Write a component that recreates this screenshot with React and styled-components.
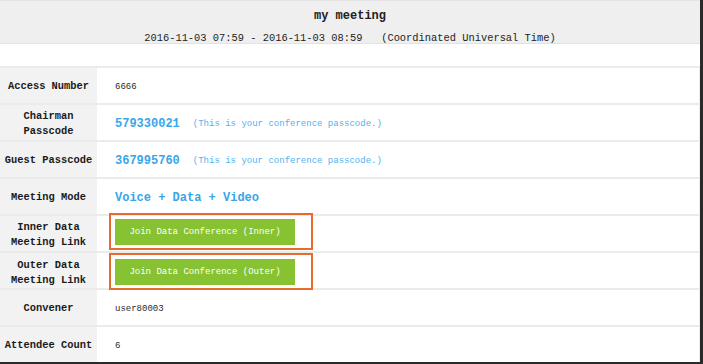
import React from "react";
import styled, { createGlobalStyle } from "styled-components";

const GlobalStyle = createGlobalStyle`
  html, body { margin: 0; padding: 0; background: #ffffff; }
  body { font-family: "Liberation Mono", "DejaVu Sans Mono", monospace; }
`;

const rows = [
  { label: ["Access Number"], kind: "plain", value: "6666" },
  { label: ["Chairman", "Passcode"], kind: "code", value: "579330021" },
  { label: ["Guest Passcode"], kind: "code", value: "367995760" },
  { label: ["Meeting Mode"], kind: "mode", value: "Voice + Data + Video" },
  { label: ["Inner Data", "Meeting Link"], kind: "link", value: "Join Data Conference (Inner)", shift: -5 },
  { label: ["Outer Data", "Meeting Link"], kind: "link", value: "Join Data Conference (Outer)", shift: -2 },
  { label: ["Convener"], kind: "plain", value: "user80003" },
  { label: ["Attendee Count"], kind: "plain", value: "6" },
];

export default function App() {
  return (
    <Page>
      <GlobalStyle />
      <Header>
        <Title>my meeting</Title>
        <TimeLine>2016-11-03 07:59 - 2016-11-03 08:59&nbsp;&nbsp;&nbsp;(Coordinated Universal Time)</TimeLine>
      </Header>
      <Gap />
      <Table>
        {rows.map((r) => (
          <Row key={r.label.join(" ")}>
            <Label>
              {r.label.map((l) => (
                <span key={l}>{l}</span>
              ))}
            </Label>
            <Cell>
              {r.kind === "plain" && <Plain>{r.value}</Plain>}
              {r.kind === "code" && (
                <>
                  <Code>{r.value}</Code>
                  <Note>(This is your conference passcode.)</Note>
                </>
              )}
              {r.kind === "mode" && <Code>{r.value}</Code>}
              {r.kind === "link" && (
                <Highlight $shift={r.shift}>
                  <JoinButton>{r.value}</JoinButton>
                </Highlight>
              )}
            </Cell>
          </Row>
        ))}
      </Table>
    </Page>
  );
}

const Page = styled.div`
  width: 703px;
  height: 364px;
  box-sizing: border-box;
  border-right: 3px solid #2a2a2a;
  border-bottom: 2px solid #2a2a2a;
  background: #ffffff;
  overflow: hidden;
`;

const Header = styled.div`
  height: 44px;
  box-sizing: border-box;
  background: #efefef;
  border-top: 1px solid #e4e4e4;
  border-bottom: 1px solid #e2e2e2;
  display: flex;
  flex-direction: column;
  align-items: center;
  color: #222;
`;

const Title = styled.div`
  font-weight: bold;
  font-size: 12px;
  line-height: 14px;
  margin-top: 8px;
`;

const TimeLine = styled.div`
  font-size: 10.4px;
  line-height: 14px;
  margin-top: 8px;
  white-space: pre;
  color: #1e1e1e;
`;

const Gap = styled.div`
  height: 22px;
`;

const Table = styled.div`
  display: flex;
  flex-direction: column;
  border-right: 1px solid #ececec;
`;

const Row = styled.div`
  display: grid;
  grid-template-columns: 97px 1fr;
  height: 37px;
  box-sizing: border-box;
  border-top: 2px solid #ebebeb;
`;

const Label = styled.div`
  background: #f2f2f2;
  display: flex;
  flex-direction: column;
  align-items: center;
  justify-content: center;
  padding-top: 2px;
  font-weight: bold;
  font-size: 10.4px;
  line-height: 15px;
  color: #1a1a1a;
  white-space: nowrap;
`;

const Cell = styled.div`
  display: flex;
  align-items: center;
  padding-left: 18px;
  padding-top: 2px;
`;

const Plain = styled.span`
  font-size: 9px;
  color: #2a2a2a;
`;

const Code = styled.span`
  font-weight: bold;
  font-size: 12px;
  color: #37a6ea;
  margin-right: 13px;
`;

const Note = styled.span`
  font-size: 9px;
  color: #4fb2f0;
`;

const Highlight = styled.div`
  position: relative;
  z-index: 1;
  align-self: flex-start;
  margin-left: -6px;
  margin-top: ${(p) => p.$shift}px;
  width: 204px;
  height: 37px;
  box-sizing: border-box;
  border: 2px solid #e96a2e;
  display: flex;
  align-items: center;
  padding-left: 4px;
`;

const JoinButton = styled.div`
  width: 180px;
  height: 26px;
  background: #86c232;
  color: #ffffff;
  font-size: 9px;
  display: flex;
  align-items: center;
  justify-content: center;
`;
